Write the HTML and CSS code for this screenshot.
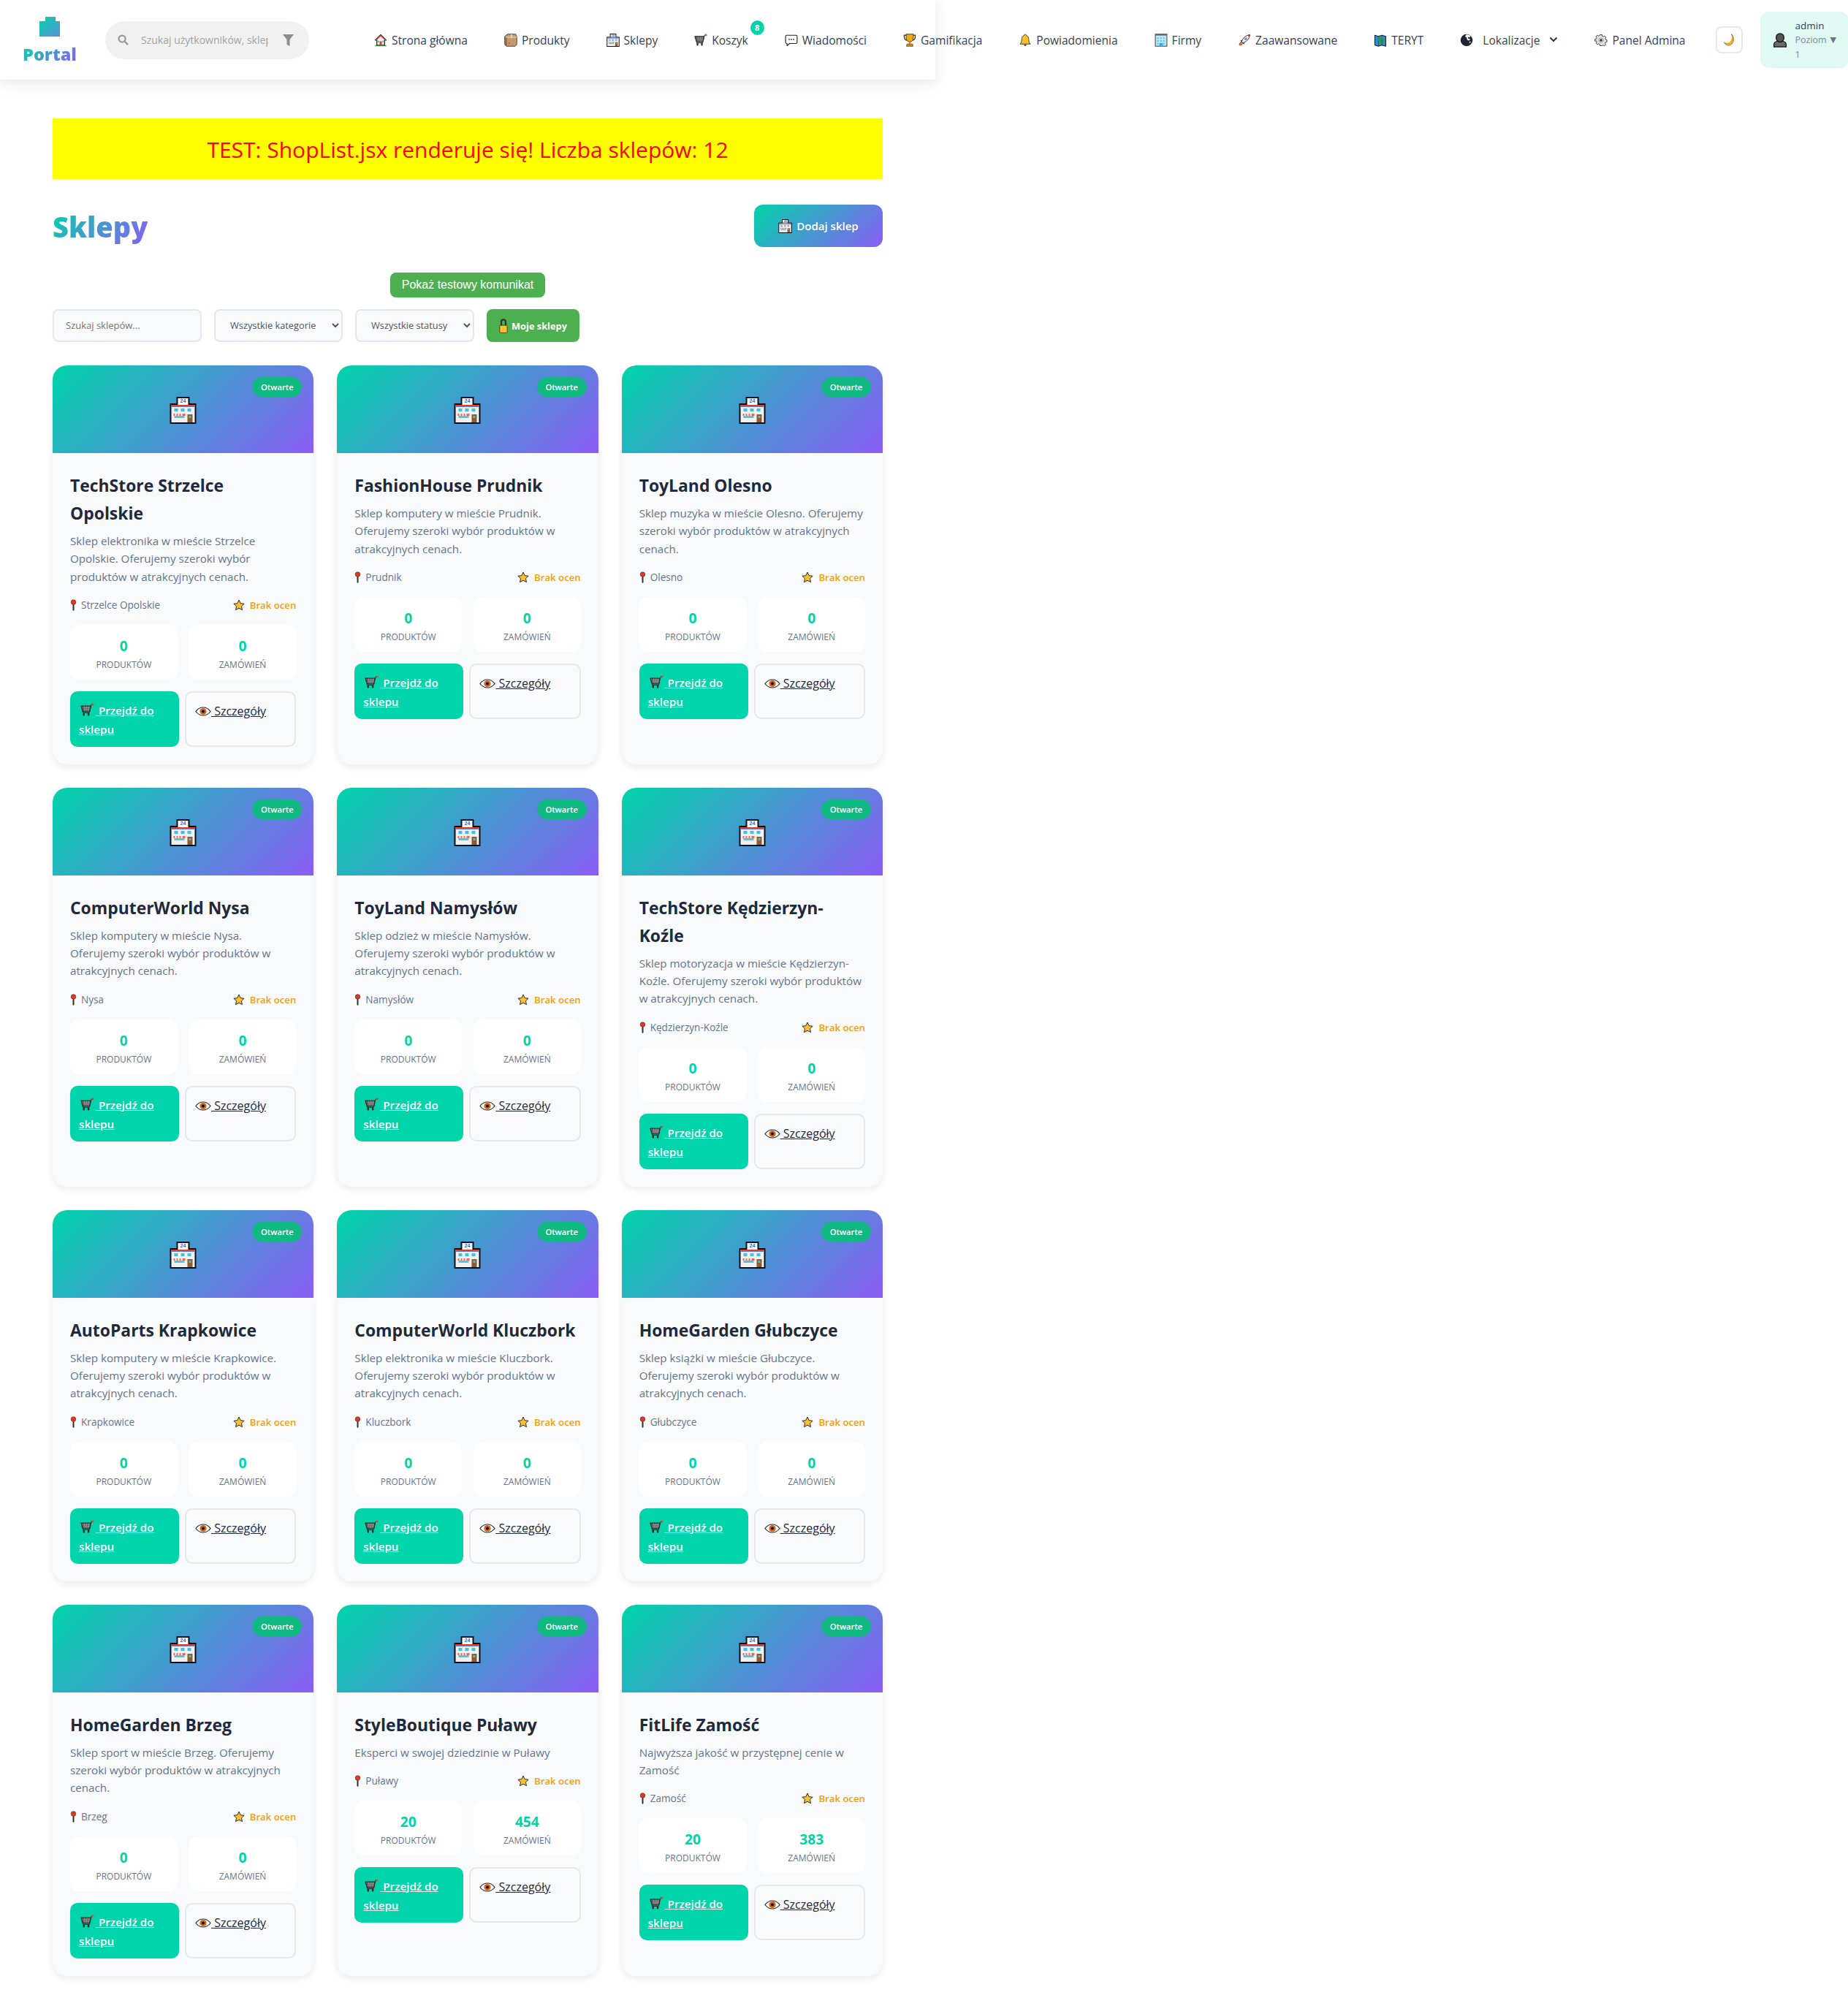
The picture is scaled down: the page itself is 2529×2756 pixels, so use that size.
FILE: index.html
```html
<!DOCTYPE html>
<html lang="pl">
<head>
  <meta charset="UTF-8">
  <title>Portal - Sklepy</title>
  <link rel="stylesheet" href="styles.css">
</head>
<body>

<svg class="defs" width="0" height="0">
  <defs>
    <linearGradient id="logoGrad" x1="0" y1="0" x2="1" y2="1">
      <stop offset="0" stop-color="#00d4aa"/><stop offset="1" stop-color="#5b8fd6"/>
    </linearGradient>
    <symbol id="i-store" viewBox="0 0 36 37">
      <rect x="9" y="0" width="18" height="11" fill="#0b0f14"/>
      <rect x="11" y="2" width="14" height="7" fill="#fff"/>
      <text class="sign-text" x="18" y="8" text-anchor="middle">24</text>
      <rect x="0" y="9" width="36" height="28" fill="#0b0f14"/>
      <rect x="11" y="9" width="14" height="2" fill="#fff"/>
      <rect x="2" y="11" width="32" height="24" fill="#f1f1f1"/>
      <rect x="2" y="11" width="32" height="2" fill="#e8401f"/>
      <rect x="2" y="13" width="32" height="1" fill="#5a7fe8"/>
      <rect x="6" y="16" width="5" height="4" fill="#37c3ee"/>
      <rect x="15" y="16" width="5" height="4" fill="#37c3ee"/>
      <rect x="24" y="16" width="5" height="4" fill="#37c3ee"/>
      <rect x="5" y="23" width="16" height="3" fill="#f2684f"/>
      <rect x="7" y="23" width="2" height="3" fill="#fff"/><rect x="11" y="23" width="2" height="3" fill="#fff"/><rect x="15" y="23" width="2" height="3" fill="#fff"/>
      <rect x="6" y="26" width="14" height="3" fill="#45c9ee"/>
      <rect x="24" y="24" width="7" height="11" fill="#8f5a2c"/>
      <rect x="26" y="26" width="3" height="3" fill="#37c3ee"/>
    </symbol>
    <symbol id="i-house" viewBox="0 0 24 24">
      <path d="M12 2 2 12h3v9h14v-9h3z" fill="#f4f4f4" stroke="#1a1a1a" stroke-width="1.6" stroke-linejoin="round"/>
      <path d="M12 2 2 12h2.5L12 5l7.500 7H22z" fill="#c4453a"/>
      <rect x="10" y="14" width="4" height="7" fill="#e2392c"/>
      <rect x="6.500" y="13" width="2.500" height="3" fill="#4bb5e8"/><rect x="15" y="13" width="2.500" height="3" fill="#4bb5e8"/>
      <rect x="2" y="21" width="20" height="2" fill="#2e8b3a"/>
    </symbol>
    <symbol id="i-box" viewBox="0 0 24 24">
      <path d="M1 5 6 1h15l2 4v15l-3 3H4l-3-3z" fill="#c49a6c" stroke="#3a3a3a" stroke-width="1.200" stroke-linejoin="round"/>
      <path d="M1 5l4 3v15H4l-3-3z" fill="#8a6a48"/>
      <path d="M5 8h18V5H1z" fill="#d8b488"/>
      <rect x="12" y="1.500" width="3" height="6.500" fill="#e8d0ae"/>
      <rect x="8" y="16" width="2" height="3" fill="#d64550"/>
    </symbol>
    <symbol id="i-cart" viewBox="0 0 24 24">
      <path d="M1 5h17l-2 10H4z" fill="#5b5b5b" stroke="#222" stroke-width="1.300" stroke-linejoin="round"/>
      <path d="M5 8h12M5.500 11h10.500M7 5.500l1 9M11 5.500v9M15 5.500l-1 9" stroke="#a8a8a8" stroke-width=".8" fill="none"/>
      <path d="M16 15l3-12 2-1" stroke="#333" stroke-width="1.400" fill="none"/>
      <circle cx="21.500" cy="2.500" r="1.800" fill="#e2492f"/>
      <path d="M4 15l1 2h10l1-2" fill="none" stroke="#333" stroke-width="1.400"/>
      <rect x="4.500" y="17" width="3" height="5" rx="1" fill="#2b2b2b"/><rect x="12.500" y="17" width="3" height="5" rx="1" fill="#2b2b2b"/>
    </symbol>
    <symbol id="i-chat" viewBox="0 0 24 24">
      <path d="M3.500 3h17a2 2 0 0 1 2 2v11a2 2 0 0 1-2 2H9l-5 4v-4h-.5a2 2 0 0 1-2-2V5a2 2 0 0 1 2-2z" fill="#fff" stroke="#222" stroke-width="1.500" stroke-linejoin="round"/>
      <circle cx="8" cy="10.500" r="1.200" fill="#333"/><circle cx="12" cy="10.500" r="1.200" fill="#333"/><circle cx="16" cy="10.500" r="1.200" fill="#333"/>
    </symbol>
    <symbol id="i-trophy" viewBox="0 0 24 24">
      <path d="M6 3H2v3c0 3.500 2.500 6 5.500 6M18 3h4v3c0 3.500-2.500 6-5.500 6" fill="none" stroke="#5a3d08" stroke-width="2"/>
      <path d="M5.500 1h13v7c0 4.500-3 7-6.500 7s-6.500-2.500-6.500-7z" fill="#f0a818" stroke="#4a3208" stroke-width="1.200"/>
      <rect x="10.500" y="14.500" width="3" height="4" fill="#c4860c"/>
      <path d="M7 19h10l1 4H6z" fill="#d8951a" stroke="#4a3208" stroke-width="1"/>
    </symbol>
    <symbol id="i-bell" viewBox="0 0 24 24">
      <path d="M12 1.500c1.500 0 2 1 2 2 3.500 1 4.500 4 4.500 8 0 4 1 5.500 3 7.500H2.500c2-2 3-3.500 3-7.500 0-4 1-7 4.500-8 0-1 .5-2 2-2z" fill="#fbc02d" stroke="#3a2f10" stroke-width="1.200" stroke-linejoin="round"/>
      <path d="M9.500 20c.3 1.700 1.300 3 2.500 3s2.200-1.300 2.500-3z" fill="#6a5215"/>
    </symbol>
    <symbol id="i-office" viewBox="0 0 24 24">
      <rect x="1.500" y="1" width="21" height="22" fill="#bfe8f7" stroke="#5d6b75" stroke-width="1.800"/>
      <rect x="1.500" y="1" width="21" height="2.500" fill="#5d6b75"/>
      <path d="M5 7h2.500v2.500H5zM10.500 7H13v2.500h-2.500zM16 7h2.500v2.500H16zM5 12h2.500v2.500H5zM10.500 12H13v2.500h-2.500zM16 12h2.500v2.500H16zM5 17h2.500v2.500H5zM16 17h2.500v2.500H16z" fill="#5ab8ea"/>
      <rect x="9" y="17" width="6" height="6" fill="#3aa5e8"/>
    </symbol>
    <symbol id="i-rocket" viewBox="0 0 24 24">
      <path d="M3 21c-.5-3 1-5 3-5.500l2.500 2.500C8 20 6 21.500 3 21z" fill="#f0821e" stroke="#222" stroke-width=".9"/>
      <path d="M5 13l4-1-1 4zM11 19l1-4-4 1z" fill="#3f8fd8" stroke="#222" stroke-width=".9"/>
      <path d="M7 15C9 8 14 3 22 2c-1 8-6 13-13 15z" fill="#f0f0f0" stroke="#222" stroke-width="1.100" stroke-linejoin="round"/>
      <path d="M17 2.800 22 2c-.2 1.800-.5 3-1 4.500z" fill="#d8302a"/>
      <circle cx="14.500" cy="9.500" r="2" fill="#9ca6ad" stroke="#444" stroke-width=".6"/>
    </symbol>
    <symbol id="i-map" viewBox="0 0 24 24">
      <path d="M2 3l6.500 2L15 3l7 2v18l-7-2-6.500 2L2 21z" fill="#2f8fd0" stroke="#16222c" stroke-width="1.400" stroke-linejoin="round"/>
      <path d="M8.500 5v18M15 3v18" stroke="#1b4a6b" stroke-width="1"/>
      <path d="M9 7l5-1 2 3-2 4 1 4-3 2-2-4-3-3z" fill="#2f9a3e"/>
      <path d="M17 9l3 1v4l-3 1z" fill="#2f9a3e"/>
    </symbol>
    <symbol id="i-globe" viewBox="0 0 24 24">
      <circle cx="12" cy="12" r="11" fill="#1f2530"/>
      <path d="M12 1.500c3 0 5.500 1 7.500 3L17 7l-3-1 1 3 4 1-3 3-3-2-1-4-3-2z" fill="#fff"/>
      <path d="M17 15l3-1-2 4z" fill="#fff"/>
    </symbol>
    <symbol id="i-gear" viewBox="0 0 24 24">
      <path d="M10 1h4l.6 2.800 2.300 1 2.400-1.500 2.800 2.800-1.500 2.400 1 2.300 2.400.7v4l-2.800.6-1 2.300 1.500 2.400-2.800 2.800-2.400-1.500-2.300 1L14 23h-4l-.6-2.800-2.300-1-2.400 1.500-2.800-2.800 1.500-2.400-1-2.300L-.4 14v-4l2.800-.6 1-2.300L1.900 4.700l2.800-2.800 2.400 1.500 2.300-1z" fill="#e4e4e4" stroke="#2c2c2c" stroke-width="1.300" stroke-linejoin="round" transform="translate(1.200 1.200) scale(.9)"/>
      <circle cx="12" cy="12" r="5" fill="#b9b9b9"/><circle cx="12" cy="12" r="2" fill="#2c2c2c"/>
    </symbol>
    <symbol id="i-moon" viewBox="0 0 24 24">
      <path d="M16 1c4 6 2 16-5 18-3 1-6 0-9-2 3 5 8 7 12 5 7-3 9-15 2-21z" fill="#fbb925" stroke="#5a4210" stroke-width=".9" stroke-linejoin="round"/>
      <path d="M16 1c4 6 2 16-5 18-3 1-6 0-9-2 5 2 9 1 12-2 3-4 4-9 2-14z" fill="#fbb925"/>
    </symbol>
    <symbol id="i-user" viewBox="0 0 24 24">
      <path d="M2 23v-4c0-3 3-5 6-5.500h8c3 .5 6 2.500 6 5.500v4z" fill="#6b6b6b" stroke="#111" stroke-width="1.500" stroke-linejoin="round"/>
      <ellipse cx="12" cy="8" rx="6.500" ry="7" fill="#555" stroke="#111" stroke-width="1.500"/>
    </symbol>
    <symbol id="i-pin" viewBox="0 0 12 24">
      <circle cx="6" cy="6" r="5" fill="#e8351f" stroke="#222" stroke-width=".8"/>
      <rect x="4.500" y="10.500" width="3" height="13" rx="1.200" fill="#2e2e2e"/>
    </symbol>
    <symbol id="i-star" viewBox="0 0 24 24">
      <path d="M12 1.500l3.200 7 7.500.9-5.500 5.100 1.500 7.500-6.700-3.700-6.700 3.700 1.500-7.500L1.300 9.400l7.500-.9z" fill="#fdc030" stroke="#2a2a2a" stroke-width="1.500" stroke-linejoin="round"/>
    </symbol>
    <symbol id="i-eye" viewBox="0 0 24 14">
      <path d="M1 7c3-4 7-6 11-6s8 2 11 6c-3 4-7 6-11 6S4 11 1 7z" fill="#fff" stroke="#222" stroke-width="1.300"/>
      <circle cx="12" cy="7" r="5" fill="#d8641a"/><circle cx="12" cy="7" r="2.200" fill="#111"/>
    </symbol>
    <symbol id="i-lock" viewBox="0 0 14 24">
      <path d="M3.500 12V5.500a3.500 3.500 0 0 1 7 0V12" fill="none" stroke="#333" stroke-width="2.500"/>
      <rect x="1" y="11" width="12" height="12" rx="1.500" fill="#fbc02d" stroke="#333" stroke-width="1"/>
    </symbol>
  </defs>
</svg>

<div class="page">

  <header class="topbar">
    <a class="logo">
      <svg class="logo-mark" viewBox="0 0 28 27"><path d="M8 0h14v6h6v21H0V6h8z" fill="url(#logoGrad)"/></svg>
      <span class="logo-text">Portal</span>
    </a>

    <div class="search">
      <svg class="search-ico" viewBox="0 0 16 16"><circle cx="6.500" cy="6.500" r="4.800" fill="none" stroke="#9a9a9a" stroke-width="2.400"/><path d="M10 10l5 5" stroke="#9a9a9a" stroke-width="2.600"/></svg>
      <input class="search-input" type="text" placeholder="Szukaj użytkowników, sklepów...">
      <svg class="filter-ico" viewBox="0 0 15 16"><path d="M0 0h15L9.500 7v9l-4-2V7z" fill="#8d8d8d"/></svg>
    </div>

    <nav class="nav">
      <a class="nav-item"><svg class="nav-ico"><use href="#i-house"/></svg>Strona główna</a>
      <a class="nav-item"><svg class="nav-ico"><use href="#i-box"/></svg>Produkty</a>
      <a class="nav-item"><svg class="nav-ico"><use href="#i-store"/></svg>Sklepy</a>
      <a class="nav-item cart-item"><svg class="nav-ico"><use href="#i-cart"/></svg>Koszyk<span class="cart-badge">8</span></a>
      <a class="nav-item"><svg class="nav-ico"><use href="#i-chat"/></svg>Wiadomości</a>
      <a class="nav-item"><svg class="nav-ico"><use href="#i-trophy"/></svg>Gamifikacja</a>
      <a class="nav-item"><svg class="nav-ico"><use href="#i-bell"/></svg>Powiadomienia</a>
      <a class="nav-item"><svg class="nav-ico"><use href="#i-office"/></svg>Firmy</a>
      <a class="nav-item"><svg class="nav-ico"><use href="#i-rocket"/></svg>Zaawansowane</a>
      <a class="nav-item"><svg class="nav-ico"><use href="#i-map"/></svg>TERYT</a>
      <a class="nav-item loc-item"><svg class="nav-ico"><use href="#i-globe"/></svg>Lokalizacje<svg class="chevron" viewBox="0 0 12 8"><path d="M1.500 1.500 6 6l4.500-4.500" fill="none" stroke="#2d3748" stroke-width="2"/></svg></a>
      <a class="nav-item"><svg class="nav-ico"><use href="#i-gear"/></svg>Panel Admina</a>
    </nav>

    <button class="theme-btn"><svg class="theme-ico"><use href="#i-moon"/></svg></button>

    <div class="user-box">
      <svg class="user-ico"><use href="#i-user"/></svg>
      <div class="user-info">
        <div class="user-name">admin</div>
        <div class="user-level">Poziom 1</div>
      </div>
      <span class="user-caret">▼</span>
    </div>
  </header>

  <main class="content">
    <div class="test-banner">TEST: ShopList.jsx renderuje się! Liczba sklepów: 12</div>

    <div class="title-row">
      <h1 class="page-title">Sklepy</h1>
      <button class="add-btn"><svg class="add-ico"><use href="#i-store"/></svg>Dodaj sklep</button>
    </div>

    <div class="test-row"><button class="test-btn">Pokaż testowy komunikat</button></div>

    <div class="filters">
      <input class="f-search" type="text" placeholder="Szukaj sklepów...">
      <select class="f-select f-cat"><option>Wszystkie kategorie</option></select>
      <select class="f-select f-status"><option>Wszystkie statusy</option></select>
      <button class="my-btn"><svg class="lock-ico"><use href="#i-lock"/></svg>Moje sklepy</button>
    </div>

    <div class="shop-grid">

      <article class="card">
        <div class="card-top"><svg class="store-ico"><use href="#i-store"/></svg><span class="status">Otwarte</span></div>
        <div class="card-body">
          <h3 class="card-name">TechStore Strzelce Opolskie</h3>
          <p class="card-desc">Sklep elektronika w mieście Strzelce Opolskie. Oferujemy szeroki wybór produktów w atrakcyjnych cenach.</p>
          <div class="card-meta"><span class="city"><svg class="pin"><use href="#i-pin"/></svg>Strzelce Opolskie</span><span class="rating"><svg class="star"><use href="#i-star"/></svg>Brak ocen</span></div>
          <div class="stats"><div class="stat"><div class="stat-num">0</div><div class="stat-label">Produktów</div></div><div class="stat"><div class="stat-num">0</div><div class="stat-label">Zamówień</div></div></div>
          <div class="actions"><a class="btn-go" href="#"><svg class="cart-ico"><use href="#i-cart"/></svg> Przejdź do sklepu</a><a class="btn-more" href="#"><svg class="eye-ico"><use href="#i-eye"/></svg> Szczegóły</a></div>
        </div>
      </article>

      <article class="card">
        <div class="card-top"><svg class="store-ico"><use href="#i-store"/></svg><span class="status">Otwarte</span></div>
        <div class="card-body">
          <h3 class="card-name">FashionHouse Prudnik</h3>
          <p class="card-desc">Sklep komputery w mieście Prudnik. Oferujemy szeroki wybór produktów w atrakcyjnych cenach.</p>
          <div class="card-meta"><span class="city"><svg class="pin"><use href="#i-pin"/></svg>Prudnik</span><span class="rating"><svg class="star"><use href="#i-star"/></svg>Brak ocen</span></div>
          <div class="stats"><div class="stat"><div class="stat-num">0</div><div class="stat-label">Produktów</div></div><div class="stat"><div class="stat-num">0</div><div class="stat-label">Zamówień</div></div></div>
          <div class="actions"><a class="btn-go" href="#"><svg class="cart-ico"><use href="#i-cart"/></svg> Przejdź do sklepu</a><a class="btn-more" href="#"><svg class="eye-ico"><use href="#i-eye"/></svg> Szczegóły</a></div>
        </div>
      </article>

      <article class="card">
        <div class="card-top"><svg class="store-ico"><use href="#i-store"/></svg><span class="status">Otwarte</span></div>
        <div class="card-body">
          <h3 class="card-name">ToyLand Olesno</h3>
          <p class="card-desc">Sklep muzyka w mieście Olesno. Oferujemy szeroki wybór produktów w atrakcyjnych cenach.</p>
          <div class="card-meta"><span class="city"><svg class="pin"><use href="#i-pin"/></svg>Olesno</span><span class="rating"><svg class="star"><use href="#i-star"/></svg>Brak ocen</span></div>
          <div class="stats"><div class="stat"><div class="stat-num">0</div><div class="stat-label">Produktów</div></div><div class="stat"><div class="stat-num">0</div><div class="stat-label">Zamówień</div></div></div>
          <div class="actions"><a class="btn-go" href="#"><svg class="cart-ico"><use href="#i-cart"/></svg> Przejdź do sklepu</a><a class="btn-more" href="#"><svg class="eye-ico"><use href="#i-eye"/></svg> Szczegóły</a></div>
        </div>
      </article>

      <article class="card">
        <div class="card-top"><svg class="store-ico"><use href="#i-store"/></svg><span class="status">Otwarte</span></div>
        <div class="card-body">
          <h3 class="card-name">ComputerWorld Nysa</h3>
          <p class="card-desc">Sklep komputery w mieście Nysa. Oferujemy szeroki wybór produktów w atrakcyjnych cenach.</p>
          <div class="card-meta"><span class="city"><svg class="pin"><use href="#i-pin"/></svg>Nysa</span><span class="rating"><svg class="star"><use href="#i-star"/></svg>Brak ocen</span></div>
          <div class="stats"><div class="stat"><div class="stat-num">0</div><div class="stat-label">Produktów</div></div><div class="stat"><div class="stat-num">0</div><div class="stat-label">Zamówień</div></div></div>
          <div class="actions"><a class="btn-go" href="#"><svg class="cart-ico"><use href="#i-cart"/></svg> Przejdź do sklepu</a><a class="btn-more" href="#"><svg class="eye-ico"><use href="#i-eye"/></svg> Szczegóły</a></div>
        </div>
      </article>

      <article class="card">
        <div class="card-top"><svg class="store-ico"><use href="#i-store"/></svg><span class="status">Otwarte</span></div>
        <div class="card-body">
          <h3 class="card-name">ToyLand Namysłów</h3>
          <p class="card-desc">Sklep odzież w mieście Namysłów. Oferujemy szeroki wybór produktów w atrakcyjnych cenach.</p>
          <div class="card-meta"><span class="city"><svg class="pin"><use href="#i-pin"/></svg>Namysłów</span><span class="rating"><svg class="star"><use href="#i-star"/></svg>Brak ocen</span></div>
          <div class="stats"><div class="stat"><div class="stat-num">0</div><div class="stat-label">Produktów</div></div><div class="stat"><div class="stat-num">0</div><div class="stat-label">Zamówień</div></div></div>
          <div class="actions"><a class="btn-go" href="#"><svg class="cart-ico"><use href="#i-cart"/></svg> Przejdź do sklepu</a><a class="btn-more" href="#"><svg class="eye-ico"><use href="#i-eye"/></svg> Szczegóły</a></div>
        </div>
      </article>

      <article class="card">
        <div class="card-top"><svg class="store-ico"><use href="#i-store"/></svg><span class="status">Otwarte</span></div>
        <div class="card-body">
          <h3 class="card-name">TechStore Kędzierzyn-Koźle</h3>
          <p class="card-desc">Sklep motoryzacja w mieście Kędzierzyn-Koźle. Oferujemy szeroki wybór produktów w atrakcyjnych cenach.</p>
          <div class="card-meta"><span class="city"><svg class="pin"><use href="#i-pin"/></svg>Kędzierzyn-Koźle</span><span class="rating"><svg class="star"><use href="#i-star"/></svg>Brak ocen</span></div>
          <div class="stats"><div class="stat"><div class="stat-num">0</div><div class="stat-label">Produktów</div></div><div class="stat"><div class="stat-num">0</div><div class="stat-label">Zamówień</div></div></div>
          <div class="actions"><a class="btn-go" href="#"><svg class="cart-ico"><use href="#i-cart"/></svg> Przejdź do sklepu</a><a class="btn-more" href="#"><svg class="eye-ico"><use href="#i-eye"/></svg> Szczegóły</a></div>
        </div>
      </article>

      <article class="card">
        <div class="card-top"><svg class="store-ico"><use href="#i-store"/></svg><span class="status">Otwarte</span></div>
        <div class="card-body">
          <h3 class="card-name">AutoParts Krapkowice</h3>
          <p class="card-desc">Sklep komputery w mieście Krapkowice. Oferujemy szeroki wybór produktów w atrakcyjnych cenach.</p>
          <div class="card-meta"><span class="city"><svg class="pin"><use href="#i-pin"/></svg>Krapkowice</span><span class="rating"><svg class="star"><use href="#i-star"/></svg>Brak ocen</span></div>
          <div class="stats"><div class="stat"><div class="stat-num">0</div><div class="stat-label">Produktów</div></div><div class="stat"><div class="stat-num">0</div><div class="stat-label">Zamówień</div></div></div>
          <div class="actions"><a class="btn-go" href="#"><svg class="cart-ico"><use href="#i-cart"/></svg> Przejdź do sklepu</a><a class="btn-more" href="#"><svg class="eye-ico"><use href="#i-eye"/></svg> Szczegóły</a></div>
        </div>
      </article>

      <article class="card">
        <div class="card-top"><svg class="store-ico"><use href="#i-store"/></svg><span class="status">Otwarte</span></div>
        <div class="card-body">
          <h3 class="card-name">ComputerWorld Kluczbork</h3>
          <p class="card-desc">Sklep elektronika w mieście Kluczbork. Oferujemy szeroki wybór produktów w atrakcyjnych cenach.</p>
          <div class="card-meta"><span class="city"><svg class="pin"><use href="#i-pin"/></svg>Kluczbork</span><span class="rating"><svg class="star"><use href="#i-star"/></svg>Brak ocen</span></div>
          <div class="stats"><div class="stat"><div class="stat-num">0</div><div class="stat-label">Produktów</div></div><div class="stat"><div class="stat-num">0</div><div class="stat-label">Zamówień</div></div></div>
          <div class="actions"><a class="btn-go" href="#"><svg class="cart-ico"><use href="#i-cart"/></svg> Przejdź do sklepu</a><a class="btn-more" href="#"><svg class="eye-ico"><use href="#i-eye"/></svg> Szczegóły</a></div>
        </div>
      </article>

      <article class="card">
        <div class="card-top"><svg class="store-ico"><use href="#i-store"/></svg><span class="status">Otwarte</span></div>
        <div class="card-body">
          <h3 class="card-name">HomeGarden Głubczyce</h3>
          <p class="card-desc">Sklep książki w mieście Głubczyce. Oferujemy szeroki wybór produktów w atrakcyjnych cenach.</p>
          <div class="card-meta"><span class="city"><svg class="pin"><use href="#i-pin"/></svg>Głubczyce</span><span class="rating"><svg class="star"><use href="#i-star"/></svg>Brak ocen</span></div>
          <div class="stats"><div class="stat"><div class="stat-num">0</div><div class="stat-label">Produktów</div></div><div class="stat"><div class="stat-num">0</div><div class="stat-label">Zamówień</div></div></div>
          <div class="actions"><a class="btn-go" href="#"><svg class="cart-ico"><use href="#i-cart"/></svg> Przejdź do sklepu</a><a class="btn-more" href="#"><svg class="eye-ico"><use href="#i-eye"/></svg> Szczegóły</a></div>
        </div>
      </article>

      <article class="card">
        <div class="card-top"><svg class="store-ico"><use href="#i-store"/></svg><span class="status">Otwarte</span></div>
        <div class="card-body">
          <h3 class="card-name">HomeGarden Brzeg</h3>
          <p class="card-desc">Sklep sport w mieście Brzeg. Oferujemy szeroki wybór produktów w atrakcyjnych cenach.</p>
          <div class="card-meta"><span class="city"><svg class="pin"><use href="#i-pin"/></svg>Brzeg</span><span class="rating"><svg class="star"><use href="#i-star"/></svg>Brak ocen</span></div>
          <div class="stats"><div class="stat"><div class="stat-num">0</div><div class="stat-label">Produktów</div></div><div class="stat"><div class="stat-num">0</div><div class="stat-label">Zamówień</div></div></div>
          <div class="actions"><a class="btn-go" href="#"><svg class="cart-ico"><use href="#i-cart"/></svg> Przejdź do sklepu</a><a class="btn-more" href="#"><svg class="eye-ico"><use href="#i-eye"/></svg> Szczegóły</a></div>
        </div>
      </article>

      <article class="card">
        <div class="card-top"><svg class="store-ico"><use href="#i-store"/></svg><span class="status">Otwarte</span></div>
        <div class="card-body">
          <h3 class="card-name">StyleBoutique Puławy</h3>
          <p class="card-desc">Eksperci w swojej dziedzinie w Puławy</p>
          <div class="card-meta"><span class="city"><svg class="pin"><use href="#i-pin"/></svg>Puławy</span><span class="rating"><svg class="star"><use href="#i-star"/></svg>Brak ocen</span></div>
          <div class="stats"><div class="stat"><div class="stat-num">20</div><div class="stat-label">Produktów</div></div><div class="stat"><div class="stat-num">454</div><div class="stat-label">Zamówień</div></div></div>
          <div class="actions"><a class="btn-go" href="#"><svg class="cart-ico"><use href="#i-cart"/></svg> Przejdź do sklepu</a><a class="btn-more" href="#"><svg class="eye-ico"><use href="#i-eye"/></svg> Szczegóły</a></div>
        </div>
      </article>

      <article class="card">
        <div class="card-top"><svg class="store-ico"><use href="#i-store"/></svg><span class="status">Otwarte</span></div>
        <div class="card-body">
          <h3 class="card-name">FitLife Zamość</h3>
          <p class="card-desc">Najwyższa jakość w przystępnej cenie w Zamość</p>
          <div class="card-meta"><span class="city"><svg class="pin"><use href="#i-pin"/></svg>Zamość</span><span class="rating"><svg class="star"><use href="#i-star"/></svg>Brak ocen</span></div>
          <div class="stats"><div class="stat"><div class="stat-num">20</div><div class="stat-label">Produktów</div></div><div class="stat"><div class="stat-num">383</div><div class="stat-label">Zamówień</div></div></div>
          <div class="actions"><a class="btn-go" href="#"><svg class="cart-ico"><use href="#i-cart"/></svg> Przejdź do sklepu</a><a class="btn-more" href="#"><svg class="eye-ico"><use href="#i-eye"/></svg> Szczegóły</a></div>
        </div>
      </article>

    </div>
  </main>
</div>

</body>
</html>
```

FILE: styles.css
```css
* { box-sizing: border-box; }
body {
  margin: 0;
  background: #fff;
  color: #1e293b;
  font-family: "Open Sans", "Noto Sans", sans-serif;
  line-height: 1.7;
  overflow-x: hidden;
}
.defs { position: absolute; }
.sign-text { fill: #2a62ee; font: 700 7px "Liberation Sans", sans-serif; }
.page { width: 1280px; }

/* top bar */
.topbar {
  display: flex;
  align-items: center;
  height: 109px;
  width: 1280px;
  padding-left: 33px;
  background: #fff;
  box-shadow: 0 4px 20px rgba(0,0,0,0.1);
}
.logo {
  display: flex;
  flex-direction: column;
  align-items: center;
  flex-shrink: 0;
  width: 70px;
  margin-right: 41px;
  margin-top: -3px;
}
.logo-mark { width: 28px; height: 27px; margin-bottom: 15px; }
.logo-text {
  font-size: 23.5px;
  font-weight: 800;
  line-height: 18px;
  background: linear-gradient(135deg, #00d4aa, #8b5cf6);
  -webkit-background-clip: text;
  background-clip: text;
  color: transparent;
}
.search {
  display: flex;
  align-items: center;
  flex-shrink: 0;
  width: 279px;
  height: 52px;
  padding-left: 17px;
  border-radius: 26px;
  background: #f1f1f1;
}
.search-ico { width: 15px; height: 15px; flex-shrink: 0; }
.search-input {
  width: 174px;
  margin-left: 17px;
  padding: 0;
  border: 0;
  background: none;
  outline: none;
  font: 14px "Open Sans", sans-serif;
}
.search-input::placeholder { color: #a3a3a3; }
.filter-ico { width: 15px; height: 16px; margin-left: 20px; flex-shrink: 0; }

.nav {
  display: flex;
  align-items: center;
  gap: 50px;
  flex-shrink: 0;
  margin-left: 89px;
  padding-top: 2px;
}
.nav-item {
  display: flex;
  align-items: center;
  gap: 6px;
  flex-shrink: 0;
  position: relative;
  color: #374151;
  font-size: 15.55px;
  white-space: nowrap;
}
.nav-ico { width: 18px; height: 18px; flex-shrink: 0; }
.cart-badge {
  position: absolute;
  top: -14px;
  right: -22px;
  width: 19px;
  height: 20px;
  border-radius: 50%;
  background: #00d4aa;
  color: #fff;
  font-size: 11px;
  font-weight: 700;
  line-height: 20px;
  text-align: center;
}
.loc-item { gap: 13px; }
.chevron { width: 12px; height: 8px; flex-shrink: 0; margin-top: -3px; }
.theme-btn {
  display: flex;
  align-items: center;
  justify-content: center;
  flex-shrink: 0;
  width: 37px;
  height: 37px;
  margin-left: 42px;
  padding: 0;
  border: 2px solid #e2e8f0;
  border-radius: 8px;
  background: #fff;
}
.theme-ico { width: 17px; height: 17px; }
.user-box {
  display: flex;
  align-items: center;
  flex-shrink: 0;
  width: 121px;
  height: 77px;
  margin-left: 24px;
  padding-left: 17px;
  border-radius: 12px;
  background: #e0f9f3;
}
.user-ico { width: 20px; height: 22px; flex-shrink: 0; }
.user-info { width: 46px; margin-left: 10px; line-height: 20px; }
.user-name { color: #374151; font-size: 13.5px; font-weight: 500; }
.user-level { color: #7b8a9e; font-size: 12.5px; }
.user-caret { margin-left: 2px; color: #64748b; font: 11px "DejaVu Sans", sans-serif; }

/* content */
.content { padding: 53px 72px 53px; }
.test-banner {
  padding: 21px 20px 19px;
  background: #ff0;
  color: #f00;
  font-size: 30px;
  line-height: 43px;
  text-align: center;
}
.title-row {
  display: flex;
  align-items: center;
  justify-content: space-between;
  margin-top: 35px;
}
.page-title {
  margin: 2px 0 0;
  font-size: 38px;
  font-weight: 800;
  line-height: 56px;
  background: linear-gradient(135deg, #00d4aa, #8b5cf6);
  -webkit-background-clip: text;
  background-clip: text;
  color: transparent;
}
.add-btn {
  display: flex;
  align-items: center;
  justify-content: center;
  gap: 6px;
  width: 176px;
  height: 58px;
  border: 0;
  border-radius: 12px;
  background: linear-gradient(135deg, #00d4aa, #8b5cf6);
  color: #fff;
  font: 600 15px "Open Sans", sans-serif;
}
.add-ico { width: 19px; height: 19px; }
.test-row { margin-top: 35px; text-align: center; }
.test-btn {
  height: 34px;
  padding: 0 16px;
  border: 0;
  border-radius: 8px;
  background: #4caf50;
  color: #fff;
  font: 16px "Liberation Sans", sans-serif;
}
.filters {
  display: flex;
  gap: 17px;
  height: 45px;
  margin-top: 16px;
}
.f-search, .f-select {
  border: 2px solid #e2e8f0;
  border-radius: 8px;
  background: #f8fafc;
  color: #4b5563;
  font: 12.8px "Open Sans", sans-serif;
}
.f-search { width: 204px; padding: 0 16px 2px; font-size: 13px; }
.f-search::placeholder { color: #757575; }
.f-select { padding: 0 4px 2px 16px; }
.f-cat { width: 176px; }
.f-status { width: 163px; }
.my-btn {
  display: flex;
  align-items: center;
  justify-content: center;
  gap: 5px;
  width: 127px;
  border: 0;
  border-radius: 8px;
  background: #4caf50;
  color: #fff;
  font: 700 12.8px "Open Sans", sans-serif;
}
.lock-ico { width: 12px; height: 22px; }

/* shop cards */
.shop-grid {
  display: grid;
  grid-template-columns: repeat(3, 1fr);
  gap: 32px;
  margin-top: 32px;
}
.card {
  overflow: hidden;
  border-radius: 20px;
  background: #f8fafc;
  box-shadow: 0 4px 10px rgba(0,0,0,0.08);
}
.card-top {
  display: flex;
  align-items: center;
  justify-content: center;
  position: relative;
  height: 120px;
  background: linear-gradient(135deg, #00d4aa, #8b5cf6);
}
.store-ico { width: 37px; height: 37px; margin-top: 3px; }
.status {
  position: absolute;
  top: 16px;
  right: 16px;
  width: 68px;
  height: 27px;
  border-radius: 14px;
  background: #10b981;
  color: #fff;
  font-size: 11.2px;
  font-weight: 600;
  line-height: 27px;
  text-align: center;
}
.card-body { padding: 24px; }
.card-name {
  margin: 0 0 6px;
  padding-top: 2px;
  color: #1e293b;
  font-size: 22.9px;
  font-weight: 700;
  line-height: 38px;
}
.card-desc {
  margin: 0 0 16px;
  color: #64748b;
  font-size: 15.2px;
  line-height: 24.3px;
}
.card-meta {
  display: flex;
  align-items: center;
  justify-content: space-between;
  margin-bottom: 16px;
  font-size: 13.6px;
  line-height: 22px;
}
.city { display: flex; align-items: center; gap: 6px; color: #64748b; }
.pin { width: 9px; height: 16px; }
.rating { display: flex; align-items: center; gap: 7px; color: #f59e0b; font-size: 13.2px; font-weight: 600; }
.star { width: 16px; height: 16px; }
.stats { display: flex; gap: 16px; margin-bottom: 16px; }
.stat {
  flex: 1;
  padding: 13px 12px 11px;
  border-radius: 12px;
  background: #fff;
  text-align: center;
}
.stat-num { color: #00d4aa; font-size: 19.2px; font-weight: 700; line-height: 32px; }
.stat-label { color: #64748b; font-size: 12px; line-height: 19px; text-transform: uppercase; }
.actions { display: flex; gap: 8px; }
.btn-go, .btn-more {
  border-radius: 10px;
  font-size: 15.2px;
  line-height: 26px;
  text-decoration: underline;
}
.btn-go {
  width: 149px;
  padding: 13px 12px 11px;
  background: #00d4aa;
  color: #fff;
  font-weight: 600;
}
.btn-more {
  flex: 1;
  padding: 12px 12px 8px;
  border: 2px solid #e2e8f0;
  color: #1e293b;
  font-size: 16px;
  font-weight: 500;
}
.cart-ico { width: 23px; height: 19px; vertical-align: -3px; }
.eye-ico { width: 22px; height: 13px; vertical-align: -1px; }
```
